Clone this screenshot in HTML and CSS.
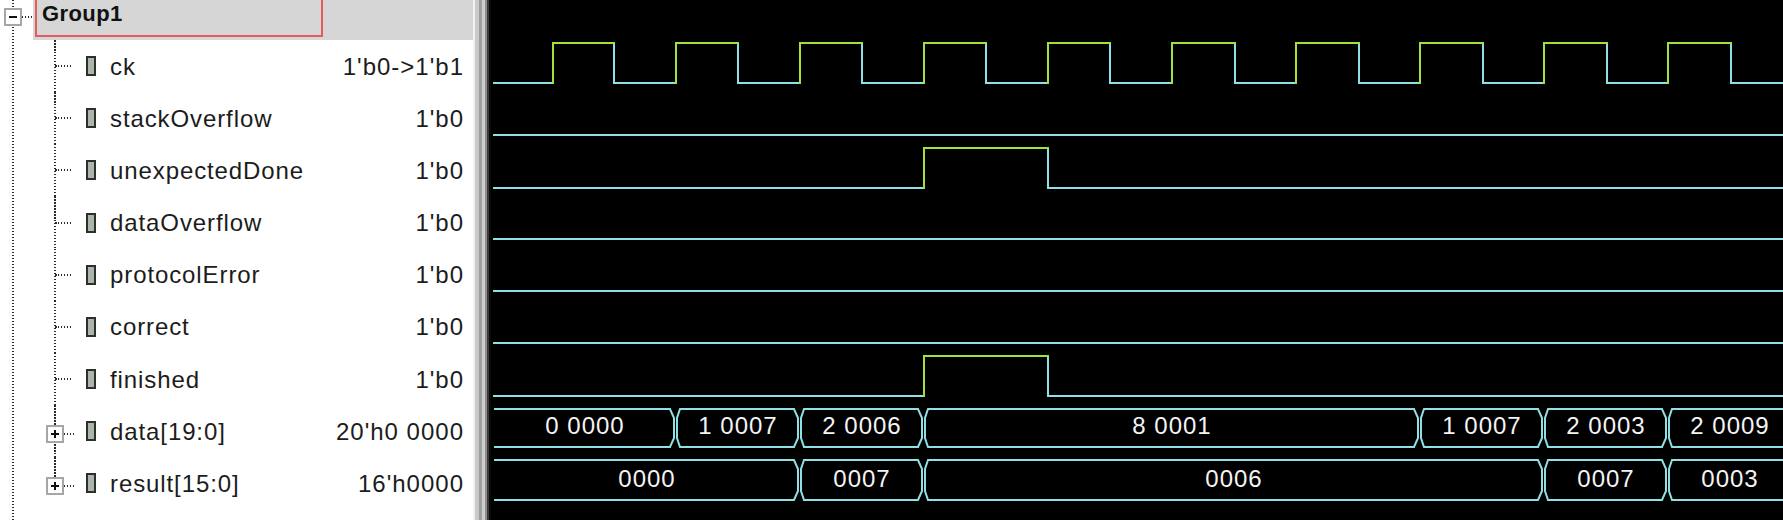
FILE: index.html
```html
<!DOCTYPE html>
<html>
<head>
<meta charset="utf-8">
<title>nWave</title>
<link rel="stylesheet" href="styles.css">
</head>
<body>
<div class="app">
  <div class="names">
    <div class="group-row">
      <div class="tree-head">
        <span class="expander"><span class="minus"></span></span>
        <span class="stub stub-head"></span>
      </div>
      <div class="group-label">
        <div class="group-name">Group1</div>
      </div>
    </div>
    <div class="children">
      <div class="row"><span class="stub"></span><span class="sig-icon"></span><span class="name">ck</span><span class="value">1'b0-&gt;1'b1</span></div>
      <div class="row"><span class="stub"></span><span class="sig-icon"></span><span class="name">stackOverflow</span><span class="value">1'b0</span></div>
      <div class="row"><span class="stub"></span><span class="sig-icon"></span><span class="name">unexpectedDone</span><span class="value">1'b0</span></div>
      <div class="row"><span class="stub"></span><span class="sig-icon"></span><span class="name">dataOverflow</span><span class="value">1'b0</span></div>
      <div class="row"><span class="stub"></span><span class="sig-icon"></span><span class="name">protocolError</span><span class="value">1'b0</span></div>
      <div class="row"><span class="stub"></span><span class="sig-icon"></span><span class="name">correct</span><span class="value">1'b0</span></div>
      <div class="row"><span class="stub"></span><span class="sig-icon"></span><span class="name">finished</span><span class="value">1'b0</span></div>
      <div class="row bus"><span class="expander plus"><span class="minus"></span><span class="vbar"></span></span><span class="stub stub-short"></span><span class="sig-icon"></span><span class="name">data[19:0]</span><span class="value">20'h0 0000</span></div>
      <div class="row bus last"><span class="expander plus"><span class="minus"></span><span class="vbar"></span></span><span class="stub stub-short"></span><span class="sig-icon"></span><span class="name">result[15:0]</span><span class="value">16'h0000</span></div>
    </div>
  </div>
  <div class="sash"></div>
  <div class="waves">
    <svg class="wave-svg" width="1292" height="520" viewBox="491 0 1292 520" xmlns="http://www.w3.org/2000/svg">
      <g class="lo" fill="none" stroke-linecap="square">
        <path d="M494 83H553 M614 43V83H676 M738 43V83H800 M862 43V83H924 M986 43V83H1048 M1110 43V83H1172 M1235 43V83H1296 M1359 43V83H1420 M1483 43V83H1544 M1607 43V83H1668 M1731 43V83H1790"/>
        <path d="M494 135H1790"/>
        <path d="M494 188H924 M1048 148V188H1790"/>
        <path d="M494 239H1790"/>
        <path d="M494 291H1790"/>
        <path d="M494 343H1790"/>
        <path d="M494 396H924 M1048 356V396H1790"/>
      </g>
      <g class="hi" fill="none" stroke-linecap="square">
        <path d="M553 83V43H614 M676 83V43H738 M800 83V43H862 M924 83V43H986 M1048 83V43H1110 M1172 83V43H1235 M1296 83V43H1359 M1420 83V43H1483 M1544 83V43H1607 M1668 83V43H1731"/>
        <path d="M924 188V148H1048"/>
        <path d="M924 396V356H1048"/>
      </g>
      <g class="bus-lines" fill="none">
        <path d="M494 409H670L674 418V438L670 447H494"/>
        <path d="M680 409L677 418V438L680 447H794L798 438V418L794 409Z"/>
        <path d="M804 409L801 418V438L804 447H918L922 438V418L918 409Z"/>
        <path d="M928 409L925 418V438L928 447H1414L1418 438V418L1414 409Z"/>
        <path d="M1424 409L1421 418V438L1424 447H1538L1542 438V418L1538 409Z"/>
        <path d="M1548 409L1545 418V438L1548 447H1662L1666 438V418L1662 409Z"/>
        <path d="M1790 409H1672L1669 418V438L1672 447H1790"/>
        <path d="M494 460H794L798 469V491L794 500H494"/>
        <path d="M804 460L801 469V491L804 500H918L922 491V469L918 460Z"/>
        <path d="M928 460L925 469V491L928 500H1538L1542 491V469L1538 460Z"/>
        <path d="M1548 460L1545 469V491L1548 500H1662L1666 491V469L1662 460Z"/>
        <path d="M1790 460H1672L1669 469V491L1672 500H1790"/>
      </g>
      <g class="bus-text" text-anchor="middle">
        <text x="585" y="434">0 0000</text>
        <text x="738" y="434">1 0007</text>
        <text x="862" y="434">2 0006</text>
        <text x="1172" y="434">8 0001</text>
        <text x="1482" y="434">1 0007</text>
        <text x="1606" y="434">2 0003</text>
        <text x="1730" y="434">2 0009</text>
        <text x="647" y="487">0000</text>
        <text x="862" y="487">0007</text>
        <text x="1234" y="487">0006</text>
        <text x="1606" y="487">0007</text>
        <text x="1730" y="487">0003</text>
      </g>
    </svg>
  </div>
</div>
</body>
</html>
```
FILE: styles.css
```css
html, body {
  margin: 0;
  padding: 0;
  height: 520px;
  overflow: hidden;
  background: #000;
}

.app {
  display: flex;
  height: 520px;
  font-family: "Liberation Sans", Arial, sans-serif;
}

/* ---------- name / value panel ---------- */
.names {
  flex: none;
  width: 473px;
  height: 520px;
  background-color: #fff;
  background-image: repeating-linear-gradient(to bottom, #2a2a2a 0 1.5px, transparent 1.5px 3px);
  background-repeat: no-repeat;
  background-size: 2px 100%;
  background-position: 12px 0;
  color: #1c1c1c;
}

.group-row {
  display: flex;
  height: 40px;
}

.tree-head {
  flex: none;
  width: 33px;
  box-sizing: border-box;
  padding-left: 4px;
  padding-top: 8px;
  display: flex;
  align-items: center;
  height: 26px;
}

.expander {
  flex: none;
  width: 18px;
  height: 18px;
  box-sizing: border-box;
  border: 2px solid #a6a6a6;
  background: #fff;
  display: flex;
  align-items: center;
  justify-content: center;
  position: relative;
}

.minus {
  display: block;
  width: 8px;
  height: 2px;
  background: #111;
}

.plus .vbar {
  position: absolute;
  left: 6px;
  top: 3px;
  width: 2px;
  height: 8px;
  background: #111;
}

.stub {
  flex: none;
  display: block;
  height: 2px;
  width: 17px;
  background-image: repeating-linear-gradient(to right, #2a2a2a 0 1.5px, transparent 1.5px 3px);
}

.stub-head {
  width: 11px;
}

.group-label {
  flex: 1;
  background: #d6d6d6;
  padding-left: 2px;
}

.group-name {
  width: 288px;
  height: 37px;
  box-sizing: border-box;
  border: 2px solid #e25c5c;
  border-top: none;
  padding-left: 5px;
  padding-top: 1px;
  font-weight: bold;
  font-size: 22px;
  letter-spacing: 0.4px;
  line-height: 25px;
  color: #111;
}

.row {
  display: flex;
  align-items: center;
  height: 52.17px;
  padding-right: 9px;
  box-sizing: border-box;
  background-image: repeating-linear-gradient(to bottom, #2a2a2a 0 1.5px, transparent 1.5px 3px);
  background-repeat: no-repeat;
  background-size: 2px 100%;
  background-position: 54px 0;
  font-size: 24px;
  letter-spacing: 0.9px;
}

.row.last {
  background-size: 2px 50%;
}

.row > .stub {
  margin-left: 55px;
}

.row .stub-short {
  margin-left: 0;
  width: 11px;
  margin-top: 6px;
}

.row .expander {
  margin-left: 46px;
  margin-top: 6px;
}

.sig-icon {
  flex: none;
  width: 10px;
  height: 20px;
  box-sizing: border-box;
  border: 2px solid #2e2e2e;
  background: #a9b6a9;
  margin-left: 14px;
}

.row.bus .sig-icon {
  margin-left: 11px;
}

.name {
  margin-left: 14px;
  padding-top: 1px;
}

.value {
  margin-left: auto;
  padding-top: 1px;
  letter-spacing: 1px;
}

/* ---------- sash ---------- */
.sash {
  flex: none;
  width: 18px;
  height: 520px;
  background: linear-gradient(to right,
    #f2f2f2 0 2px,
    #c9c9c9 2px 6px,
    #9e9e9e 6px 9px,
    #cdcdcd 9px 12px,
    #8e8e8e 12px 14px,
    #3a3a3a 14px 16px,
    #0a0a0a 16px 18px);
}

/* ---------- waveforms ---------- */
.waves {
  flex: 1;
  background: #000;
  overflow: hidden;
}

.wave-svg {
  display: block;
}

.lo path {
  stroke: #8ee0e4;
  stroke-width: 2;
}

.hi path {
  stroke: #a2e23c;
  stroke-width: 2;
}

.bus-lines path {
  stroke: #8ee0e4;
  stroke-width: 2;
  stroke-linejoin: miter;
}

.bus-text text {
  fill: #f4f4f4;
  font-family: "Liberation Sans", Arial, sans-serif;
  font-size: 24px;
  letter-spacing: 1px;
}
```
